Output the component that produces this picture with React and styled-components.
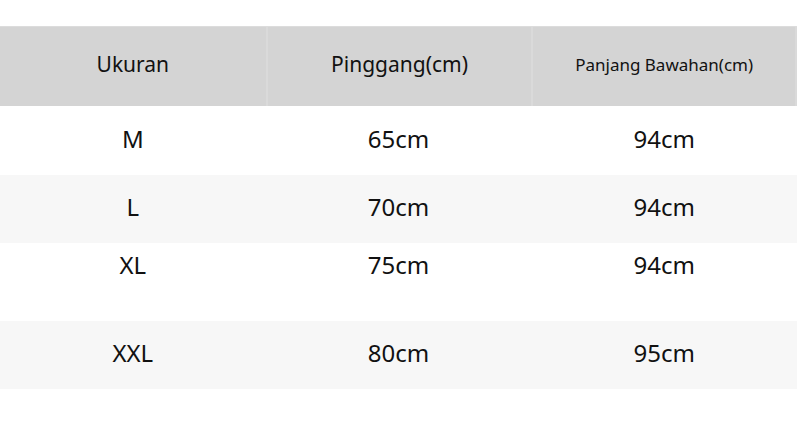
import React from 'react';
import styled, { createGlobalStyle } from 'styled-components';

const GlobalStyle = createGlobalStyle`
  html, body {
    margin: 0;
    padding: 0;
    background: #ffffff;
  }
  body {
    font-family: "Noto Sans", "Open Sans", sans-serif;
    color: #111111;
  }
`;

const Page = styled.div`
  width: 800px;
  height: 445px;
  padding-top: 26px;
  box-sizing: border-box;
  overflow: hidden;
`;

const Table = styled.div`
  width: 797px;
  display: flex;
  flex-direction: column;
`;

const HeaderRow = styled.div`
  display: grid;
  grid-template-columns: repeat(3, 1fr);
  height: 80px;
  background: #d4d4d4;
  border-top: 1px solid #dcdcdc;
  box-sizing: border-box;
`;

const HeaderCell = styled.div`
  display: flex;
  align-items: center;
  justify-content: center;
  font-size: ${props => props.$size}px;
  border-left: ${props => props.$first ? 'none' : '2px solid #dadada'};
  border-right: ${props => props.$last ? '2px solid #dadada' : 'none'};
  padding-bottom: 5px;
`;

const Row = styled.div`
  display: grid;
  grid-template-columns: repeat(3, 1fr);
  height: ${props => props.$height}px;
  background: ${props => props.$shaded ? '#f7f7f7' : '#ffffff'};
  padding-bottom: ${props => props.$lift}px;
  box-sizing: border-box;
`;

const Cell = styled.div`
  display: flex;
  align-items: center;
  justify-content: center;
  font-size: 24px;
  padding-bottom: 5px;
`;

const columns = [
  { label: 'Ukuran', size: 21 },
  { label: 'Pinggang(cm)', size: 21 },
  { label: 'Panjang Bawahan(cm)', size: 17 },
];

const rows = [
  { size: 'M', waist: '65cm', length: '94cm', height: 69, lift: 0 },
  { size: 'L', waist: '70cm', length: '94cm', height: 68, lift: 0, shaded: true },
  { size: 'XL', waist: '75cm', length: '94cm', height: 78, lift: 30 },
  { size: 'XXL', waist: '80cm', length: '95cm', height: 68, lift: 0, shaded: true },
];

const App = () => {
  return (
    <Page>
      <GlobalStyle />
      <Table>
        <HeaderRow>
          {columns.map((col, i) => (
            <HeaderCell
              key={col.label}
              $size={col.size}
              $first={i === 0}
              $last={i === columns.length - 1}
            >
              {col.label}
            </HeaderCell>
          ))}
        </HeaderRow>
        {rows.map((row) => (
          <Row
            key={row.size}
            $height={row.height}
            $lift={row.lift}
            $shaded={row.shaded}
          >
            <Cell>{row.size}</Cell>
            <Cell>{row.waist}</Cell>
            <Cell>{row.length}</Cell>
          </Row>
        ))}
      </Table>
    </Page>
  );
};

export default App;
